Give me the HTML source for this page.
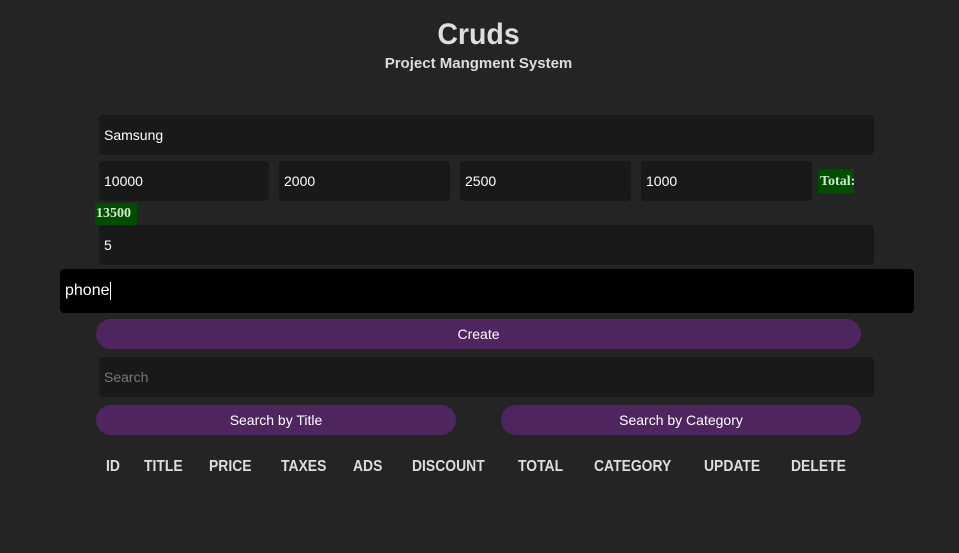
<!DOCTYPE html>
<html><head><style>
body{margin:0;width:959px;height:553px;background:#242424;position:relative;overflow:hidden;font-family:"Liberation Sans",Arial,sans-serif;}
.a{position:absolute;box-sizing:border-box;}
.in{background:#191919;border-radius:4px;color:#fff;font-size:14px;padding-left:5px;display:flex;align-items:center;}
.btn{background:#4f2560;border-radius:15px;color:#fff;font-size:14px;display:flex;align-items:center;justify-content:center;}
.h{top:458px;font-weight:bold;font-size:16px;color:#ddd;white-space:nowrap;transform:scaleX(0.87);transform-origin:left;}
.g{background:#004d00;color:#cfe8cf;font-weight:bold;font-size:13px;display:flex;align-items:center;font-family:"Liberation Serif",serif;}
</style></head><body>
<div class="a" style="left:0;width:957px;top:18px;text-align:center;color:#ddd;font-weight:bold;font-size:30px;transform:scaleX(0.95);">Cruds</div>
<div class="a" style="left:0;width:957px;top:55px;text-align:center;color:#ddd;font-weight:bold;font-size:15px;">Project Mangment System</div>
<div class="a in" style="left:99px;top:115px;width:775px;height:40px;">Samsung</div>
<div class="a in" style="left:99px;top:161px;width:170px;height:40px;">10000</div>
<div class="a in" style="left:279px;top:161px;width:171px;height:40px;">2000</div>
<div class="a in" style="left:460px;top:161px;width:171px;height:40px;">2500</div>
<div class="a in" style="left:641px;top:161px;width:171px;height:40px;">1000</div>
<div class="a g" style="left:818px;top:169px;width:36px;height:25px;padding-left:2px;font-size:14px;">Total:</div>
<div class="a g" style="left:95px;top:203px;width:42px;height:22px;padding-left:1px;font-size:14px;">13500</div>
<div class="a in" style="left:99px;top:225px;width:775px;height:40px;">5</div>
<div class="a in" style="left:60px;top:269px;width:854px;height:44px;background:#000;font-size:16px;">phone<span style="display:inline-block;width:1px;height:18px;background:#fff;"></span></div>
<div class="a btn" style="left:96px;top:319px;width:765px;height:30px;">Create</div>
<div class="a in" style="left:99px;top:357px;width:775px;height:40px;color:#777;">Search</div>
<div class="a btn" style="left:96px;top:405px;width:360px;height:30px;">Search by Title</div>
<div class="a btn" style="left:501px;top:405px;width:360px;height:30px;">Search by Category</div>
<div class="a h" style="left:106px">ID</div>
<div class="a h" style="left:144px">TITLE</div>
<div class="a h" style="left:209px">PRICE</div>
<div class="a h" style="left:281px">TAXES</div>
<div class="a h" style="left:353px">ADS</div>
<div class="a h" style="left:412px">DISCOUNT</div>
<div class="a h" style="left:518px">TOTAL</div>
<div class="a h" style="left:594px">CATEGORY</div>
<div class="a h" style="left:704px">UPDATE</div>
<div class="a h" style="left:791px">DELETE</div>
</body></html>
